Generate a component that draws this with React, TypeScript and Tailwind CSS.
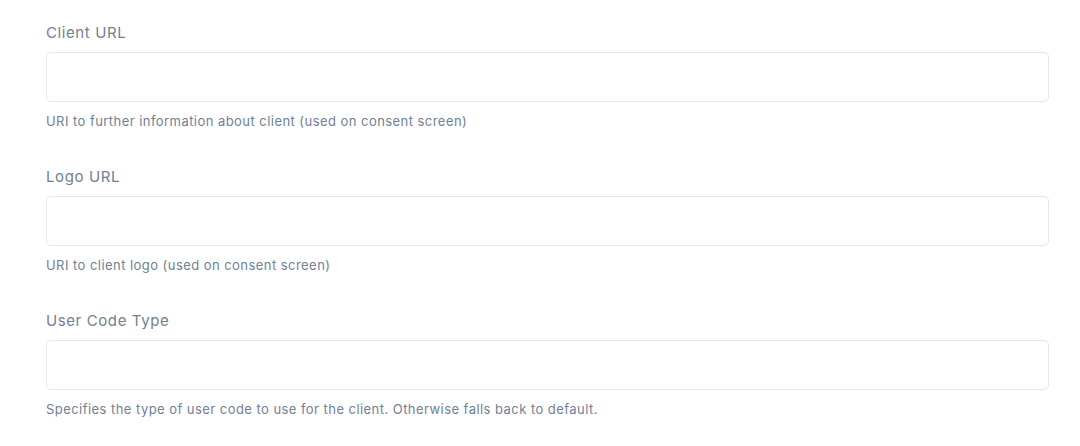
const fields = [
  {
    label: "Client URL",
    help: "URI to further information about client (used on consent screen)",
  },
  {
    label: "Logo URL",
    help: "URI to client logo (used on consent screen)",
  },
  {
    label: "User Code Type",
    help: "Specifies the type of user code to use for the client. Otherwise falls back to default.",
  },
];

const Field = ({ label, help }: { label: string; help: string }) => {
  return (
    <div className="flex flex-col">
      <label className="text-[15px] leading-[20px] tracking-[0.6px] text-[#718096]">{label}</label>
      <input
        type="text"
        className="mt-[9px] h-[50px] w-full rounded-[5px] border border-[#e5e7eb] bg-white px-3 outline-none"
      />
      <p className="mt-[11px] text-[13px] leading-[16px] tracking-[0.45px] text-[#718096]">{help}</p>
    </div>
  );
};

export default function App() {
  return (
    <div
      className="min-h-screen bg-white pl-[46px] pr-[31px] pt-[23px]"
      style={{ fontFamily: "Inter, 'Noto Sans', sans-serif" }}
    >
      <div className="flex flex-col gap-[38px]">
        {fields.map((f) => (
          <Field key={f.label} label={f.label} help={f.help} />
        ))}
      </div>
    </div>
  );
}
